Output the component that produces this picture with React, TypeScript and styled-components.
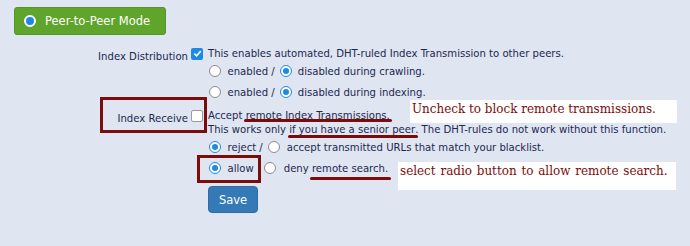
import styled, { createGlobalStyle } from "styled-components";

const GlobalStyle = createGlobalStyle`
  html, body {
    margin: 0;
    padding: 0;
  }
  body {
    background: #dfe5f1;
    font-family: "DejaVu Sans", Verdana, sans-serif;
    color: #1c2850;
  }
`;

const Page = styled.div`
  position: relative;
  width: 690px;
  height: 246px;
  padding-top: 7px;
  box-sizing: border-box;
  overflow: hidden;
`;

const ModeButton = styled.button`
  display: flex;
  align-items: center;
  gap: 9px;
  width: 152px;
  height: 28px;
  margin-left: 14px;
  padding: 0 0 0 9px;
  box-sizing: border-box;
  background: #5fa52b;
  border: 1px solid #53952a;
  border-radius: 3px;
  color: #fff;
  font-family: inherit;
  font-size: 11.5px;
`;

const ModeDot = styled.span`
  width: 8px;
  height: 8px;
  border: 2px solid #fff;
  border-radius: 50%;
  background: #1e88e5;
`;

const Form = styled.div`
  margin-top: 11.5px;
  font-size: 10.1px;
`;

const Setting = styled.div`
  display: flex;
  & + & {
    margin-top: 6px;
  }
`;

const Label = styled.div`
  width: 191px;
  padding: 3px 3px 0 0;
  box-sizing: border-box;
  text-align: right;
  line-height: 14px;
`;

const Body = styled.div`
  display: flex;
  flex-direction: column;
`;

const MainLine = styled.div`
  display: flex;
  align-items: center;
  gap: 5px;
  line-height: 14px;
`;

const Note = styled.div`
  padding-left: 17px;
  line-height: 14px;
`;

const OptionRow = styled.div<{ $gap?: number }>`
  display: flex;
  align-items: center;
  gap: ${p => p.$gap ?? 5}px;
  height: 21px;
  padding-left: 18px;
`;

const Option = styled.label<{ $gap?: number }>`
  display: inline-flex;
  align-items: center;
  gap: ${p => p.$gap ?? 6.5}px;
`;

const Radio = styled.span<{ $on?: boolean }>`
  position: relative;
  width: 12px;
  height: 12px;
  box-sizing: border-box;
  border: ${p => (p.$on ? "1.5px solid #1e88e5" : "1px solid #8a8a8a")};
  border-radius: 50%;
  background: #fff;
  &::after {
    content: "";
    display: ${p => (p.$on ? "block" : "none")};
    position: absolute;
    left: 50%;
    top: 50%;
    width: 6px;
    height: 6px;
    margin: -3px 0 0 -3px;
    border-radius: 50%;
    background: #1e88e5;
  }
`;

const Box = styled.span<{ $on?: boolean }>`
  display: inline-flex;
  align-items: center;
  justify-content: center;
  width: 12px;
  height: 12px;
  box-sizing: border-box;
  border-radius: 2px;
  border: ${p => (p.$on ? "none" : "1px solid #9a9a9a")};
  background: ${p => (p.$on ? "#1e88e5" : "#fff")};
`;

const Mark = styled.span<{ $drop: number }>`
  position: relative;
  &::after {
    content: "";
    position: absolute;
    left: -1.5px;
    right: -2.5px;
    bottom: ${p => -p.$drop}px;
    height: 3px;
    border-radius: 2px;
    background: #7c0b0b;
  }
`;

const Actions = styled.div`
  padding-left: 208px;
  margin-top: 7.5px;
`;

const SaveButton = styled.button`
  width: 50px;
  height: 27px;
  background: #337ab7;
  border: 1px solid #2e6da4;
  border-radius: 4px;
  color: #fff;
  font-family: inherit;
  font-size: 11.5px;
`;

const Highlight = styled.div<{ $x: number; $y: number; $w: number; $h: number }>`
  position: absolute;
  left: ${p => p.$x}px;
  top: ${p => p.$y}px;
  width: ${p => p.$w}px;
  height: ${p => p.$h}px;
  box-sizing: border-box;
  border: 3px solid #7c0b0b;
`;

const Callout = styled.div<{ $x: number; $y: number; $w: number; $h: number; $ws?: number }>`
  position: absolute;
  left: ${p => p.$x}px;
  top: ${p => p.$y}px;
  width: ${p => p.$w}px;
  height: ${p => p.$h}px;
  padding: 0 0 0 2px;
  box-sizing: border-box;
  background: #fff;
  color: #7c0b0b;
  font-family: "DejaVu Serif Condensed", "DejaVu Serif", serif;
  font-stretch: condensed;
  font-size: 13.3px;
  line-height: 17px;
  word-spacing: ${p => p.$ws ?? 0}px;
  white-space: nowrap;
`;

const Check = () => (
  <svg width="9" height="9" viewBox="0 0 10 10">
    <path d="M1.5 5.2 L4 7.6 L8.6 2.4" fill="none" stroke="#fff" strokeWidth="1.8" />
  </svg>
);

export default function App() {
  return (
    <Page>
      <GlobalStyle />
      <ModeButton>
        <ModeDot />
        Peer-to-Peer Mode
      </ModeButton>

      <Form>
        <Setting>
          <Label>Index Distribution</Label>
          <Body>
            <MainLine>
              <Box $on>
                <Check />
              </Box>
              This enables automated, DHT-ruled Index Transmission to other peers.
            </MainLine>
            <OptionRow>
              <Option>
                <Radio />
                enabled /
              </Option>
              <Option $gap={6}>
                <Radio $on />
                disabled during crawling.
              </Option>
            </OptionRow>
            <OptionRow>
              <Option>
                <Radio />
                enabled /
              </Option>
              <Option $gap={6}>
                <Radio $on />
                disabled during indexing.
              </Option>
            </OptionRow>
          </Body>
        </Setting>

        <Setting>
          <Label>Index Receive</Label>
          <Body>
            <MainLine>
              <Box />
              <span>
                Accept <Mark $drop={1}>remote Index Transmissions.</Mark>
              </span>
            </MainLine>
            <Note>
              This works only <Mark $drop={3.5}>if you have a senior peer</Mark>. The DHT-rules do not work without
              this function.
            </Note>
            <OptionRow>
              <Option>
                <Radio $on />
                reject /
              </Option>
              <Option $gap={7}>
                <Radio />
                accept transmitted URLs that match your blacklist.
              </Option>
            </OptionRow>
            <OptionRow $gap={10}>
              <Option>
                <Radio $on />
                allow
              </Option>
              <Option $gap={8}>
                <Radio />
                <span>
                  deny <Mark $drop={6}>remote search.</Mark>
                </span>
              </Option>
            </OptionRow>
          </Body>
        </Setting>

        <Actions>
          <SaveButton>Save</SaveButton>
        </Actions>
      </Form>

      <Highlight $x={100} $y={96.5} $w={107} $h={36.5} />
      <Highlight $x={197} $y={155} $w={64} $h={28} />
      <Callout $x={410} $y={99.5} $w={267} $h={23}>
        Uncheck to block remote transmissions.
      </Callout>
      <Callout $x={398} $y={161.5} $w={278} $h={28} $ws={1}>
        select radio button to allow remote search.
      </Callout>
    </Page>
  );
}
